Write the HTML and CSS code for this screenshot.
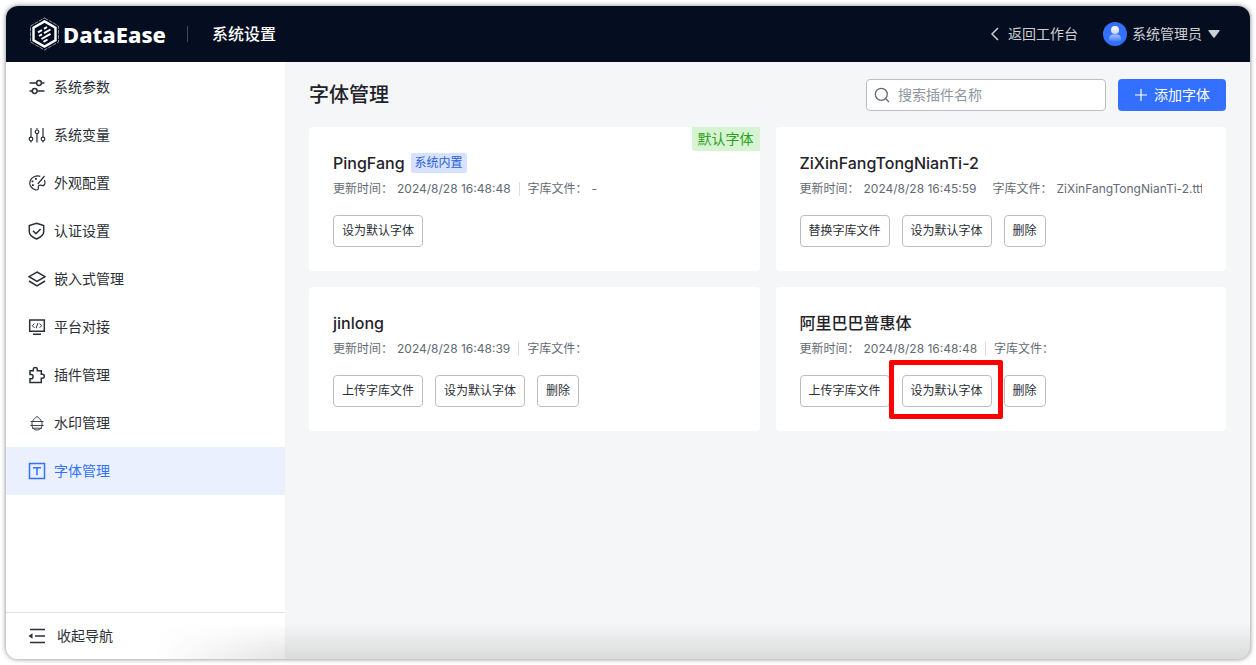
FILE: index.html
```html
<!DOCTYPE html>
<html lang="zh-CN">
<head>
<meta charset="utf-8">
<meta name="viewport" content="width=device-width, initial-scale=1">
<title>DataEase 系统设置</title>
<link rel="stylesheet" href="styles.css">
</head>
<body>
<div class="window">
  <header class="topbar">
    <a class="brand" href="#">
      <svg class="brand-mark" viewBox="0 0 30 34" fill="none">
        <path d="M15 1 29 9v16L15 33 1 25V9z" stroke="#8d929d" stroke-width="1" stroke-dasharray="4 1"/>
        <path d="M15 4.400 26 10.700v12.600L15 29.600 4 23.300V10.700z" stroke="#fff" stroke-width="2.400"/>
        <path d="m8.500 15.300 4-2.300M14.500 11.800l3-1.800M9.500 19l3-1.700M14.500 16.200l6.500-3.700M12 22l9-5.200M14 24.800l4-2.300" stroke="#fff" stroke-width="2"/>
      </svg>
      <span class="brand-name">DataEase</span>
    </a>
    <span class="topbar-rule"></span>
    <span class="topbar-title">系统设置</span>
    <nav class="topbar-actions">
      <a class="back" href="#">
        <svg class="back-icon" viewBox="0 0 10 14" fill="none" stroke="currentColor" stroke-width="1.500"><path d="M8 1 2 7l6 6"/></svg>
        返回工作台
      </a>
      <button class="user" type="button">
        <svg class="avatar" viewBox="0 0 24 24">
          <defs>
            <linearGradient id="head" x2="0" y2="1"><stop offset="0" stop-color="#fff"/><stop offset="1" stop-color="#c4d4ff"/></linearGradient>
            <linearGradient id="body" x2="0" y2="1"><stop offset="0" stop-color="#a9c1ff"/><stop offset="1" stop-color="#4a7dff"/></linearGradient>
          </defs>
          <circle cx="12" cy="12" r="12" fill="#3370ff"/>
          <path d="M6 18v-1.500c0-2.500 2-4 4-4h4c2 0 4 1.500 4 4V18q0 1-1 1H7q-1 0-1-1z" fill="url(#body)"/>
          <circle cx="12" cy="8" r="4" fill="url(#head)"/>
        </svg>
        系统管理员
        <svg class="caret" viewBox="0 0 12 8"><path d="M1 0h10q1 0 .5 1L6.600 7.500q-.6.700-1.200 0L.5 1Q0 0 1 0z" fill="currentColor"/></svg>
      </button>
    </nav>
  </header>

  <div class="body">
    <aside class="sidebar">
      <nav class="menu">
        <a class="menu-item" href="#">
          <svg class="icon" viewBox="0 0 18 18"><path d="M1.500 5h7M13.500 5h3M1.500 13h2.700M9.300 13h7.200"/><circle cx="11" cy="5" r="2.400"/><circle cx="6.700" cy="13" r="2.400"/></svg>
          系统参数
        </a>
        <a class="menu-item" href="#">
          <svg class="icon thin" viewBox="0 0 18 18"><path d="M3 2v9M3 15v1.500M9 2v1.500M9 8v8.500M15 2v9M15 15v1.500"/><circle cx="3" cy="13" r="1.800"/><circle cx="9" cy="5.800" r="1.800"/><circle cx="15" cy="13" r="1.800"/></svg>
          系统变量
        </a>
        <a class="menu-item" href="#">
          <svg class="icon thin" viewBox="0 0 18 18"><path d="M12.300 2.300A8 7 0 1 0 7.500 15.900c2.600.4 3.200-.9 2.800-2.400-.4-2 1.200-2.700 3.200-2.100 1.800.5 3.500-.4 3.500-2.500 0-1-.2-2-.7-2.900M16.500 2 9.800 10"/><path class="solid" d="M7 4h1.800v1.800H7zM3.600 6.500h1.800v1.800H3.600zM4 10.300h1.800v1.800H4z"/></svg>
          外观配置
        </a>
        <a class="menu-item" href="#">
          <svg class="icon" viewBox="0 0 18 18"><path d="M8.500 1.300 15.700 3.600V10c0 3.200-3.300 5.200-7.200 7-3.900-1.800-7.200-3.800-7.200-7V3.600zM5 8.800l2.900 2.900 4.700-4.700"/></svg>
          认证设置
        </a>
        <a class="menu-item" href="#">
          <svg class="icon" viewBox="0 0 18 18"><path d="M9 2 17 6.700 9 11.300 1 6.700zM1 11l8 4.900 8-4.900"/></svg>
          嵌入式管理
        </a>
        <a class="menu-item" href="#">
          <svg class="icon" viewBox="0 0 18 18"><path d="M1.700 2h14.600v11.300H1.700zM5 16.200h8"/><path class="fine" d="M6.500 5.500 4.300 7.700l2.200 2.200M11.500 5.500l2.200 2.200-2.200 2.200M9.800 5.200 8.200 10.200"/></svg>
          平台对接
        </a>
        <a class="menu-item" href="#">
          <svg class="icon" viewBox="0 0 18 18"><path d="M2 4.700h3.300V3.400a2 2 0 0 1 4 0v1.300h4v3.600h1a2 2 0 0 1 0 4h-1v4.200H2v-3.700h1a2.100 2.100 0 0 0 0-4.200H2z"/></svg>
          插件管理
        </a>
        <a class="menu-item" href="#">
          <svg class="icon faint" viewBox="0 0 18 18"><path d="M4.500 7.500C5.300 5.500 7 4 9 2.500c2 1.500 3.700 3 4.500 5M2.500 7.500h13M2.500 11.500h13M4 7.500v4M14 7.500v4M4 14.200h10M4 11.500C4.200 14.500 6.500 16 9 16s4.800-1.500 5-4.500"/></svg>
          水印管理
        </a>
        <a class="menu-item active" href="#" aria-current="page">
          <svg class="icon" viewBox="0 0 18 18"><path d="M1.500 1.500h15v15h-15zM5 5.700h8M9 5.700v7.500"/></svg>
          字体管理
        </a>
      </nav>
      <button class="collapse" type="button">
        <svg class="icon" viewBox="0 0 18 18"><path d="M2 2.500h15M7 9h10M2 15.500h15"/><path class="solid" d="M.5 9 4.500 6.200v5.600z"/></svg>
        收起导航
      </button>
    </aside>

    <main class="content">
      <div class="page-head">
        <h1>字体管理</h1>
        <label class="search">
          <svg class="search-icon" viewBox="0 0 16 16" fill="none" stroke="currentColor" stroke-width="1.300"><circle cx="7.300" cy="7.300" r="6"/><path d="m11.700 11.700 3.300 3.300"/></svg>
          <input type="text" placeholder="搜索插件名称" aria-label="搜索插件名称">
        </label>
        <button class="add" type="button">
          <svg class="plus" viewBox="0 0 12 12" stroke="currentColor" stroke-width="1.200"><path d="M6 0v12M0 6h12"/></svg>
          添加字体
        </button>
      </div>

      <div class="cards">
        <section class="card">
          <span class="default-flag">默认字体</span>
          <h2>PingFang <span class="tag">系统内置</span></h2>
          <p class="meta"><span>更新时间：</span><span class="value">2024/8/28 16:48:48</span><i class="rule"></i><span>字库文件：</span><span class="value">-</span></p>
          <div class="actions"><button type="button">设为默认字体</button></div>
        </section>
        <section class="card">
          <h2>ZiXinFangTongNianTi-2</h2>
          <p class="meta"><span>更新时间：</span><span class="value">2024/8/28 16:45:59</span><i class="rule blank"></i><span>字库文件：</span><span class="value">ZiXinFangTongNianTi-2.ttf</span></p>
          <div class="actions"><button type="button">替换字库文件</button><button type="button">设为默认字体</button><button type="button">删除</button></div>
        </section>
        <section class="card">
          <h2>jinlong</h2>
          <p class="meta"><span>更新时间：</span><span class="value">2024/8/28 16:48:39</span><i class="rule"></i><span>字库文件：</span></p>
          <div class="actions"><button type="button">上传字库文件</button><button type="button">设为默认字体</button><button type="button">删除</button></div>
        </section>
        <section class="card">
          <h2>阿里巴巴普惠体</h2>
          <p class="meta"><span>更新时间：</span><span class="value">2024/8/28 16:48:48</span><i class="rule"></i><span>字库文件：</span></p>
          <div class="actions"><button type="button">上传字库文件</button><span class="marked"><button type="button">设为默认字体</button></span><button type="button">删除</button></div>
        </section>
      </div>
    </main>
  </div>
</div>
</body>
</html>
```
FILE: styles.css
```css
* { box-sizing: border-box; }

body {
  margin: 0;
  padding: 6px;
  min-height: 100vh;
  display: flex;
  background: #fff;
  color: #2b2f36;
  font: 14px/22px Inter, "Noto Sans CJK SC", sans-serif;
}

button, input { font: inherit; color: inherit; }
button { cursor: pointer; }
a { color: inherit; text-decoration: none; }
svg { flex: none; display: block; }

.window {
  position: relative;
  flex: 1;
  min-width: 0;
  display: flex;
  flex-direction: column;
  border-radius: 12px;
  overflow: hidden;
  background: #f5f6f7;
  box-shadow: 0 0 5px rgba(0, 0, 0, 0.5);
}

/* Soft shade along the lower edge of the window */
.window::after {
  content: "";
  position: absolute;
  left: 150px;
  right: 0;
  bottom: 0;
  height: 36px;
  background: linear-gradient(to bottom, rgba(60, 66, 60, 0), rgba(60, 66, 60, 0.15));
  mask-image: linear-gradient(to right, transparent, #000 130px);
  pointer-events: none;
}

.topbar {
  display: flex;
  align-items: center;
  height: 56px;
  padding: 0 30px 0 23px;
  background: #050e21;
  color: #fff;
}

.brand { display: flex; align-items: center; gap: 3px; }
.brand-mark { width: 31px; height: 34px; }
.brand-name { font: 800 22px/32px "Noto Sans", sans-serif; }
.topbar-rule { width: 1px; height: 16px; margin: 0 24px 0 21px; background: #434a59; }
.topbar-title { font-size: 16px; font-weight: 500; }
.topbar-actions { display: flex; align-items: center; gap: 25px; margin-left: auto; color: #cdcfd3; }
.back { display: flex; align-items: center; gap: 8px; }
.back-icon { width: 10px; height: 14px; }
.user { display: flex; align-items: center; gap: 5px; padding: 0; border: 0; background: none; }
.avatar { width: 24px; height: 24px; }
.caret { width: 12px; height: 8px; margin-left: 1px; }

.body { flex: 1; display: flex; min-height: 0; }

.sidebar {
  flex: none;
  width: 279px;
  display: flex;
  flex-direction: column;
  background: #fff;
}

.menu { flex: 1; padding-top: 1px; }
.menu-item {
  display: flex;
  align-items: center;
  gap: 8px;
  height: 48px;
  padding: 0 22px;
}
.menu-item.active { background: #ebf0ff; color: #3370ff; }

.icon { width: 18px; height: 18px; fill: none; stroke: currentColor; stroke-width: 1.500; }
.icon.thin { stroke-width: 1.200; }
.icon.faint { stroke-width: 0.900; }
.icon .fine { stroke-width: 1; }
.icon .solid { fill: currentColor; stroke: none; }

.collapse {
  display: flex;
  align-items: center;
  gap: 11px;
  height: 47px;
  padding: 0 22px;
  border: 0;
  border-top: 1px solid #dee0e3;
  background: none;
}

.content { flex: 1; min-width: 0; padding: 17px 24px 24px; }

.page-head { display: flex; align-items: center; gap: 12px; margin-bottom: 16px; }
h1 { margin: 0 auto 0 0; font-size: 20px; line-height: 32px; font-weight: 500; color: #1f2329; }

.search {
  display: flex;
  align-items: center;
  gap: 8px;
  width: 240px;
  height: 32px;
  padding: 0 8px 0 7px;
  border: 1px solid #bbbfc4;
  border-radius: 4px;
  background: #fff;
  color: #646a73;
}
.search-icon { width: 16px; height: 16px; }
.search input { flex: 1; min-width: 0; padding: 0; border: 0; outline: 0; background: none; }
.search input::placeholder { color: #8f959e; opacity: 1; }

.add {
  display: flex;
  align-items: center;
  gap: 7px;
  height: 32px;
  padding: 0 16px 0 17px;
  border: 0;
  border-radius: 4px;
  background: #3370ff;
  color: #fff;
}
.plus { width: 12px; height: 12px; }

.cards { display: grid; grid-template-columns: repeat(2, minmax(0, 1fr)); gap: 16px; }
.card {
  position: relative;
  padding: 24px;
  border-radius: 4px;
  background: #fff;
}

.default-flag {
  position: absolute;
  top: 0;
  right: 0;
  padding: 0 6px;
  border-radius: 0 0 0 4px;
  background: #d6f4d2;
  color: #2ea121;
  line-height: 24px;
}

h2 { display: flex; align-items: center; gap: 6px; margin: 0; font-size: 16px; line-height: 24px; font-weight: 500; color: #1f2329; }
.tag {
  padding: 0 4px;
  border-radius: 2px;
  background: #d6e2ff;
  color: #2b5fd9;
  font-size: 12px;
  line-height: 20px;
  font-weight: 400;
}

.meta {
  display: flex;
  align-items: center;
  margin: 4px 0 16px;
  overflow: hidden;
  white-space: nowrap;
  color: #646a73;
  font-size: 12px;
  line-height: 20px;
}
.value { margin-left: 4px; }
.rule { flex: none; width: 1px; height: 14px; margin: 0 8px; background: #dcdee1; }
.rule.blank { width: 0; }

.actions { display: flex; gap: 12px; }
.actions button {
  height: 32px;
  padding: 0 8px;
  border: 1px solid #bbbfc4;
  border-radius: 4px;
  background: #fff;
  font-size: 12px;
  line-height: 20px;
}

.marked { position: relative; display: flex; }
.marked::after {
  content: "";
  position: absolute;
  inset: -15px -11px -12px -13px;
  border: 5px solid #f00;
  border-radius: 2px;
  pointer-events: none;
}
```
